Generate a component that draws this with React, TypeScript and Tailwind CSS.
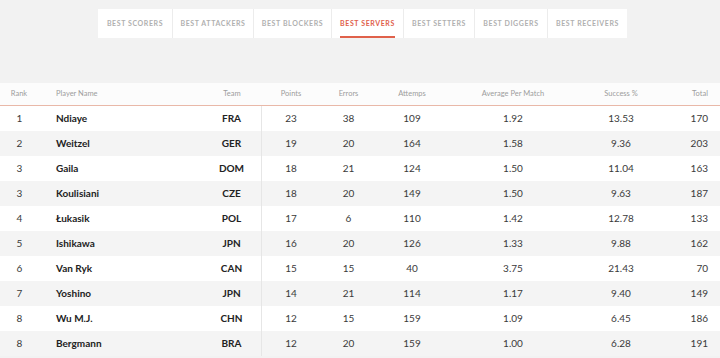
import React from "react";

const tabs = [
  { label: "BEST SCORERS", w: 74 },
  { label: "BEST ATTACKERS", w: 81 },
  { label: "BEST BLOCKERS", w: 78 },
  { label: "BEST SERVERS", w: 72, active: true },
  { label: "BEST SETTERS", w: 71 },
  { label: "BEST DIGGERS", w: 73 },
  { label: "BEST RECEIVERS", w: 80 },
];

const rows = [
  ["1", "Ndiaye", "FRA", "23", "38", "109", "1.92", "13.53", "170"],
  ["2", "Weitzel", "GER", "19", "20", "164", "1.58", "9.36", "203"],
  ["3", "Gaila", "DOM", "18", "21", "124", "1.50", "11.04", "163"],
  ["3", "Koulisiani", "CZE", "18", "20", "149", "1.50", "9.63", "187"],
  ["4", "Łukasik", "POL", "17", "6", "110", "1.42", "12.78", "133"],
  ["5", "Ishikawa", "JPN", "16", "20", "126", "1.33", "9.88", "162"],
  ["6", "Van Ryk", "CAN", "15", "15", "40", "3.75", "21.43", "70"],
  ["7", "Yoshino", "JPN", "14", "21", "114", "1.17", "9.40", "149"],
  ["8", "Wu M.J.", "CHN", "12", "15", "159", "1.09", "6.45", "186"],
  ["8", "Bergmann", "BRA", "12", "20", "159", "1.00", "6.28", "191"],
];

const grid = "grid grid-cols-[40px_162px_60px_58px_57px_70px_132px_84px_1fr]";

export default function App() {
  return (
    <div
      className="w-[720px] h-[358px] overflow-hidden bg-[#f2f2f2]"
      style={{ fontFamily: "Lato, 'Open Sans', sans-serif" }}
    >
      <div className="pt-[9px] h-[83px] flex">
        <div className="flex h-[29px] bg-white ml-[98px]">
          {tabs.map((t, i) => (
            <div
              key={t.label}
              style={{ width: t.w }}
              className={`relative flex items-center justify-center ${i > 0 ? "border-l border-[#ececec]" : ""}`}
            >
              <span
                className={`relative h-full flex items-center text-[7px] font-bold tracking-[0.6px] ${t.active ? "text-[#e0614b]" : "text-[#b0b0b0]"}`}
              >
                {t.label}
                {t.active && (
                  <span className="absolute left-0 right-0 bottom-0 h-[2px] bg-[#e0614b]" />
                )}
              </span>
            </div>
          ))}
        </div>
      </div>
      <div className="bg-white">
        <div className={`${grid} h-[23px] items-center text-[7.5px] text-[#9d9d9d] border-b-[1.5px] border-[#e9b8a8] bg-[#fcfcfc]`}>
          <div className="text-center pr-[2px]">Rank</div>
          <div className="pl-[16px]">Player Name</div>
          <div className="text-center">Team</div>
          <div className="text-center">Points</div>
          <div className="text-center">Errors</div>
          <div className="text-center">Attemps</div>
          <div className="text-center">Average Per Match</div>
          <div className="text-center">Success %</div>
          <div className="text-right pr-[12px]">Total</div>
        </div>
        {rows.map((r, i) => (
          <div
            key={i}
            className={`${grid} h-[25px] items-center text-[10px] text-[#3a3a3a] ${i % 2 === 1 ? "bg-[#f4f4f4]" : "bg-white"}`}
          >
            <div className="text-center pr-[1px]">{r[0]}</div>
            <div className="pl-[16px] font-bold text-[#222]">{r[1]}</div>
            <div className="text-center font-bold text-[#222] h-full flex items-center justify-center border-r border-[#e6e6e6]">{r[2]}</div>
            <div className="text-center">{r[3]}</div>
            <div className="text-center">{r[4]}</div>
            <div className="text-center">{r[5]}</div>
            <div className="text-center">{r[6]}</div>
            <div className="text-center">{r[7]}</div>
            <div className="text-right pr-[12px]">{r[8]}</div>
          </div>
        ))}
      </div>
    </div>
  );
}
